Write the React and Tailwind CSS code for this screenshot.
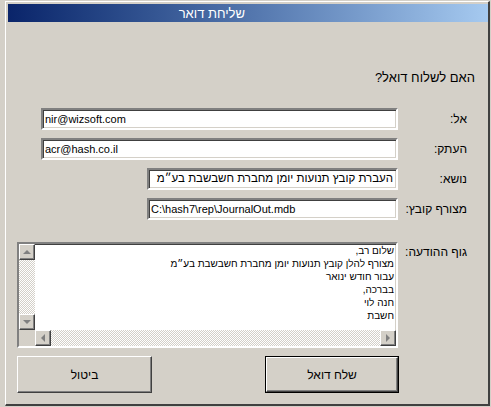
import React from 'react'

const sunken = 'border-2 border-t-[#808080] border-l-[#808080] border-b-white border-r-white shadow-[inset_1px_1px_0_#404040,inset_-1px_-1px_0_#d4d0c8]'
const raised = 'border border-t-white border-l-white border-b-[#404040] border-r-[#404040] shadow-[inset_-1px_-1px_0_#808080,inset_1px_1px_0_#d4d0c8]'
const track = 'bg-[repeating-conic-gradient(#ffffff_0%_25%,#d4d0c8_0%_50%)] bg-[length:2px_2px]'

function Field({ label, value, wide, rtl }) {
  return (
    <div className="flex items-center h-[22px]">
      <div
        className={`${sunken} h-[22px] bg-white flex items-center overflow-hidden ${wide ? 'ml-[33px] w-[357px]' : 'ml-[139px] w-[251px]'} ${rtl ? 'justify-start pr-[3px] text-[11.5px]' : 'pl-[2px] text-[11px]'}`}
        dir={rtl ? 'rtl' : 'ltr'}
      >
        <span className="text-black leading-none whitespace-nowrap">{value}</span>
      </div>
      <div className="flex-1 pr-[21px] text-right text-[12px]" dir="rtl">
        {label}
      </div>
    </div>
  )
}

function Arrow({ dir }) {
  if (dir === 'up') return <div className="w-0 h-0 border-x-[4px] border-x-transparent border-b-[4px] border-b-[#808080]" />
  if (dir === 'down') return <div className="w-0 h-0 border-x-[4px] border-x-transparent border-t-[4px] border-t-[#808080]" />
  if (dir === 'left') return <div className="w-0 h-0 border-y-[4px] border-y-transparent border-r-[4px] border-r-[#808080]" />
  return <div className="w-0 h-0 border-y-[4px] border-y-transparent border-l-[4px] border-l-[#808080]" />
}

function ScrollBtn({ dir }) {
  return (
    <div className={`${raised} w-[16px] h-[16px] bg-[#d4d0c8] flex items-center justify-center shrink-0`}>
      <Arrow dir={dir} />
    </div>
  )
}

export default function App() {
  const body = [
    'שלום רב,',
    'מצורף להלן קובץ תנועות יומן מחברת חשבשבת בע״מ',
    'עבור חודש ינואר',
    'בברכה,',
    'חנה לוי',
    'חשבת',
  ]

  return (
    <div className="w-[491px] h-[407px] bg-[#d4d0c8] pt-px font-['Liberation_Sans','DejaVu_Sans',sans-serif] text-black overflow-hidden">
      <div className="ml-[5px] w-[485px] h-[405px] border-l border-t border-white border-r-2 border-b-2 border-r-[#404040] border-b-[#404040] pl-[2px] pt-[2px]">
        {/* title bar */}
        <div className="w-[480px] h-[18px] bg-gradient-to-r from-[#0a246a] to-[#a6caf0] flex items-center">
          <div className="w-[237px] text-right text-white text-[13px] leading-none" dir="rtl">
            שליחת דואר
          </div>
        </div>

        <div className="w-[480px]">
          <div className="mt-[48px] h-[15px] pr-[13px] text-right text-[13px] leading-[15px]" dir="rtl">
            האם לשלוח דואל?
          </div>

          <div className="mt-[23px] flex flex-col gap-[8px]">
            <Field label="אל:" value="nir@wizsoft.com" wide />
            <Field label="העתק:" value="acr@hash.co.il" wide />
            <Field label="נושא:" value="העברת קובץ תנועות יומן מחברת חשבשבת בע״מ" rtl />
            <Field label="מצורף קובץ:" value="C:\hash7\rep\JournalOut.mdb" />
          </div>

          <div className="mt-[22px] flex items-start">
            <div className={`${sunken} ml-[9px] w-[381px] h-[106px] bg-white grid grid-cols-[16px_1fr] grid-rows-[1fr_16px]`}>
              <div className="flex flex-col">
                <ScrollBtn dir="up" />
                <div className={`flex-1 ${track}`} />
                <ScrollBtn dir="down" />
              </div>
              <div className="pr-[2px] text-right text-[10px] leading-[13px] overflow-hidden" dir="rtl">
                {body.map((line, i) => (
                  <div key={i} className="whitespace-nowrap">{line}</div>
                ))}
              </div>
              <div className="bg-[#d4d0c8]" />
              <div className="flex">
                <ScrollBtn dir="left" />
                <div className={`flex-1 ${track}`} />
                <ScrollBtn dir="right" />
              </div>
            </div>
            <div className="flex-1 pr-[21px] pt-[1px] text-right text-[12px]" dir="rtl">
              גוף ההודעה:
            </div>
          </div>

          <div className="mt-[8px] flex">
            <button className={`${raised} ml-[9px] w-[135px] h-[37px] bg-[#d4d0c8] text-[12px] flex items-center justify-center`} dir="rtl">
              ביטול
            </button>
            <div className="ml-[113px] w-[134px] h-[37px] border border-black">
              <button className={`${raised} w-full h-full bg-[#d4d0c8] text-[12px] flex items-center justify-center`} dir="rtl">
                שלח דואל
              </button>
            </div>
          </div>
        </div>
      </div>
    </div>
  )
}
